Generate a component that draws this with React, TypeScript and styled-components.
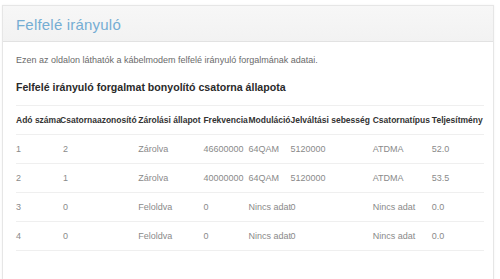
import styled, { createGlobalStyle } from "styled-components";

interface Channel {
  id: string;
  channelId: string;
  lock: string;
  freq: string;
  modulation: string;
  symbolRate: string;
  type: string;
  power: string;
}

const channels: Channel[] = [
  { id: "1", channelId: "2", lock: "Zárolva", freq: "46600000", modulation: "64QAM", symbolRate: "5120000", type: "ATDMA", power: "52.0" },
  { id: "2", channelId: "1", lock: "Zárolva", freq: "40000000", modulation: "64QAM", symbolRate: "5120000", type: "ATDMA", power: "53.5" },
  { id: "3", channelId: "0", lock: "Feloldva", freq: "0", modulation: "Nincs adat", symbolRate: "0", type: "Nincs adat", power: "0.0" },
  { id: "4", channelId: "0", lock: "Feloldva", freq: "0", modulation: "Nincs adat", symbolRate: "0", type: "Nincs adat", power: "0.0" },
];

const columns = [
  { label: "Adó száma", width: 44 },
  { label: "Csatornaazonosító", width: 78 },
  { label: "Zárolási állapot", width: 65 },
  { label: "Frekvencia", width: 45 },
  { label: "Moduláció", width: 42 },
  { label: "Jelváltási sebesség", width: 82 },
  { label: "Csatornatípus", width: 59 },
  { label: "Teljesítmény", width: 52 },
];

const App = () => {
  return (
    <>
      <GlobalStyle />
      <Panel>
        <PanelHeader>
          <PanelTitle>Felfelé irányuló</PanelTitle>
        </PanelHeader>
        <PanelBody>
          <Intro>Ezen az oldalon láthatók a kábelmodem felfelé irányuló forgalmának adatai.</Intro>
          <SectionTitle>Felfelé irányuló forgalmat bonyolító csatorna állapota</SectionTitle>
          <StatusTable>
            <colgroup>
              {columns.map((c) => (
                <col key={c.label} style={{ width: c.width }} />
              ))}
            </colgroup>
            <thead>
              <tr>
                {columns.map((c) => (
                  <HeadCell key={c.label}>{c.label}</HeadCell>
                ))}
              </tr>
            </thead>
            <tbody>
              {channels.map((ch) => (
                <tr key={ch.id}>
                  <Cell>{ch.id}</Cell>
                  <Cell $indent>{ch.channelId}</Cell>
                  <Cell>{ch.lock}</Cell>
                  <Cell>{ch.freq}</Cell>
                  <Cell>{ch.modulation}</Cell>
                  <Cell>{ch.symbolRate}</Cell>
                  <Cell>{ch.type}</Cell>
                  <Cell>{ch.power}</Cell>
                </tr>
              ))}
            </tbody>
          </StatusTable>
        </PanelBody>
      </Panel>
    </>
  );
};

const GlobalStyle = createGlobalStyle`
  html, body {
    margin: 0;
    background: #fff;
    font-family: "Liberation Sans", Arial, sans-serif;
  }
`;

const Panel = styled.div`
  margin: 5px 6px 0 2px;
  border: 1px solid #e6e6e6;
  border-bottom: none;
  box-shadow: 0 0 2px rgba(0, 0, 0, 0.06);
  min-height: 280px;
  background: #fff;
`;

const PanelHeader = styled.div`
  height: 35px;
  display: flex;
  align-items: center;
  padding: 0 13px;
  background: linear-gradient(#f7f7f7, #f2f2f2);
  border-bottom: 1px solid #e2e2e2;
`;

const PanelTitle = styled.h1`
  margin: 2px 0 0;
  font-size: 15px;
  font-weight: normal;
  color: #74add3;
  letter-spacing: 0.2px;
`;

const PanelBody = styled.div`
  padding: 0 13px;
`;

const Intro = styled.p`
  margin: 13px 0 0;
  font-size: 9px;
  color: #6a6a6a;
`;

const SectionTitle = styled.h2`
  margin: 16px 0 0;
  font-size: 10.6px;
  font-weight: bold;
  color: #2a2a2a;
`;

const StatusTable = styled.table`
  margin-top: 12px;
  width: 468px;
  table-layout: fixed;
  border-collapse: collapse;
  tr {
    height: 29px;
    border-top: 1px solid #efefef;
  }
  tbody tr:last-child {
    border-bottom: 1px solid #efefef;
  }
`;

const HeadCell = styled.th`
  padding: 0;
  text-align: left;
  white-space: nowrap;
  font-size: 8.5px;
  font-weight: bold;
  color: #333;
`;

const Cell = styled.td<{ $indent?: boolean }>`
  padding: 0 0 0 ${(p) => (p.$indent ? "3px" : "0")};
  white-space: nowrap;
  overflow: visible;
  font-size: 9px;
  color: #8a8a8a;
`;

export default App;
